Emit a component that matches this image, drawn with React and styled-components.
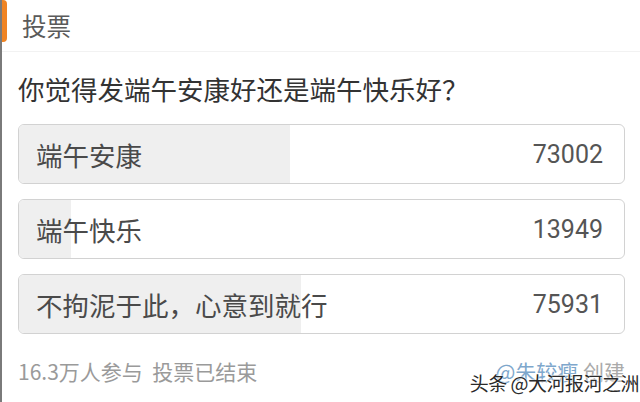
import React from 'react';
import styled, { createGlobalStyle } from 'styled-components';

const options = [
  { label: '端午安康', count: 73002 },
  { label: '端午快乐', count: 13949 },
  { label: '不拘泥于此，心意到就行', count: 75931 },
];

const total = options.reduce((s, o) => s + o.count, 0);

function App() {
  return (
    <Page>
      <GlobalStyle />
      <Header>投票</Header>
      <Body>
        <Question>你觉得发端午安康好还是端午快乐好？</Question>
        <OptionList>
          {options.map((o) => (
            <Option key={o.label}>
              <Fill style={{ width: `${(o.count / total) * 100}%` }} />
              <Label>{o.label}</Label>
              <Count>{o.count}</Count>
            </Option>
          ))}
        </OptionList>
        <Footer>
          <Stats>16.3万人参与&nbsp;&nbsp;投票已结束</Stats>
          <Creator>
            <Author>@朱较瘦</Author> 创建
          </Creator>
          <Watermark>头条 @大河报河之洲</Watermark>
        </Footer>
      </Body>
    </Page>
  );
}

const GlobalStyle = createGlobalStyle`
  body {
    margin: 0;
    background: #fff;
    font-family: 'Noto Sans CJK SC', 'Noto Sans', sans-serif;
  }
`;

const Page = styled.div`
  position: relative;
  width: 640px;
  height: 402px;
  box-sizing: border-box;
  border-left: 2px solid #7a7a7a;
  background: #fff;
  overflow: hidden;

  &::before {
    content: '';
    position: absolute;
    left: -2px;
    top: 0;
    width: 7px;
    height: 42px;
    background: #ef8424;
    border-radius: 0 4px 4px 0;
  }
`;

const Header = styled.div`
  height: 51px;
  display: flex;
  align-items: center;
  padding-left: 20px;
  font-size: 24.5px;
  color: #5a5a5a;
  border-bottom: 1px solid #f2f2f2;
`;

const Body = styled.div`
  padding: 0 15px 0 16px;
`;

const Question = styled.div`
  font-size: 26.5px;
  color: #333;
  height: 72px;
  display: flex;
  align-items: center;
`;

const OptionList = styled.div`
  display: flex;
  flex-direction: column;
  gap: 15px;
`;

const Option = styled.div`
  position: relative;
  height: 60px;
  box-sizing: border-box;
  border: 1px solid #d2d2d2;
  border-radius: 6px;
  overflow: hidden;
  display: flex;
  align-items: center;
  justify-content: space-between;
  padding: 0 21px 0 17px;
`;

const Fill = styled.div`
  position: absolute;
  left: 0;
  top: 0;
  bottom: 0;
  background: #efefef;
`;

const Label = styled.span`
  position: relative;
  font-size: 26.5px;
  color: #4a4a4a;
`;

const Count = styled.span`
  position: relative;
  font-family: Roboto, 'Noto Sans', sans-serif;
  font-size: 25px;
  color: #555;
`;

const Footer = styled.div`
  position: relative;
  height: 74px;
  display: flex;
  align-items: center;
  justify-content: space-between;
  font-size: 21px;
  color: #9a9a9a;
`;

const Stats = styled.span``;

const Creator = styled.span`
  color: #aaa;
`;

const Author = styled.span`
  color: #7ea7cc;
`;

const Watermark = styled.span`
  position: absolute;
  right: -14px;
  top: 35px;
  font-size: 19px;
  letter-spacing: -0.5px;
  color: #2a2a2a;
  white-space: nowrap;
  text-shadow: 0 0 2px #fff, 0 0 2px #fff, 0 0 1px #fff;
`;

export default App;
